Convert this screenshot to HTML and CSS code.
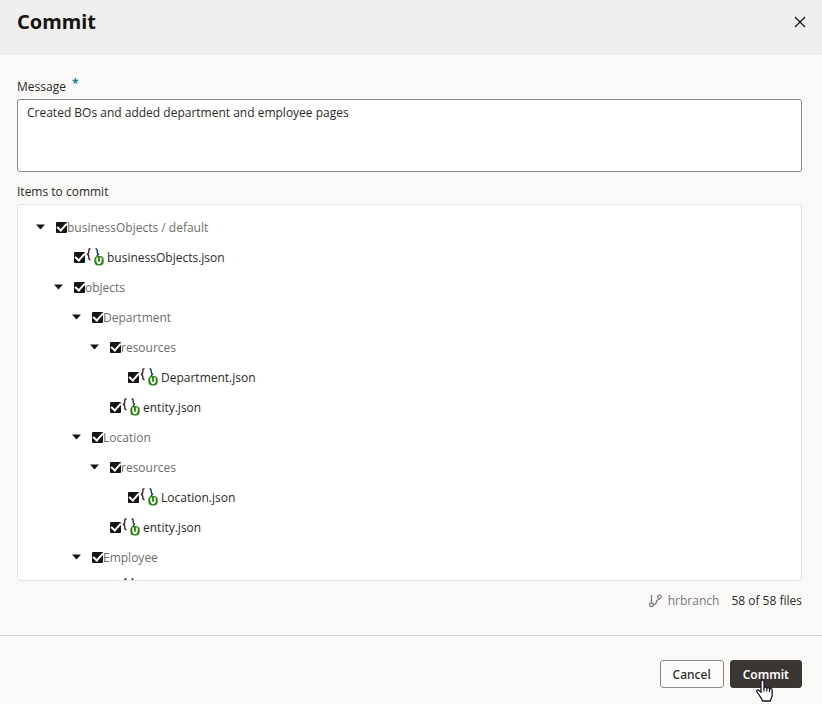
FILE: index.html
```html
<!DOCTYPE html>
<html lang="en">
<head>
<meta charset="utf-8">
<title>Commit</title>
<meta name="viewport" content="width=device-width, initial-scale=1">
<link rel="stylesheet" href="styles.css">
</head>
<body>
<svg class="sprite" aria-hidden="true">
  <symbol id="caret" viewBox="0 0 10 6"><path d="M0 0.5h9L4.500 5.500z" fill="#161513"/></symbol>
  <symbol id="json" viewBox="0 0 19 18">
    <path d="M5.500.7C4 .7 3.800 1.500 3.800 2.700v1.500c0 1.200-.4 1.700-1.800 2 1.400.3 1.800.8 1.800 2v1.500c0 1.200.2 2 1.700 2" fill="none" stroke="#4a1f20" stroke-width="1.400"/>
    <path d="M10.500.7c1.500 0 1.700.8 1.700 2v1.500c0 1.200.4 1.700 1.800 2-1.400.3-1.800.8-1.800 2v1" fill="none" stroke="#1c4158" stroke-width="1.400"/>
    <rect x="9.300" y="8" width="9.400" height="9.500" rx="4" fill="#2f8518"/>
    <path d="M12.200 9.500v3.300c0 3 3.600 3 3.600 0V9.500" fill="none" stroke="#fff" stroke-width="1.700"/>
  </symbol>
</svg>
<form class="dialog">
  <header class="header">
    <h1 class="title">Commit</h1>
    <button class="close" type="button" aria-label="Close"><svg width="12" height="12" viewBox="0 0 12 12"><path d="M1 1l10 10M11 1L1 11" fill="none" stroke="#161513" stroke-width="1.300"/></svg></button>
  </header>
  <main class="content">
    <label class="label" for="message">Message <span class="required">*</span></label>
    <textarea class="message" id="message">Created BOs and added department and employee pages</textarea>
    <h2 class="label" id="items">Items to commit</h2>
    <div class="tree">
      <ul class="branch" aria-labelledby="items">
        <li>
          <div class="row"><button class="caret" type="button" aria-label="Collapse"><svg width="10" height="6"><use href="#caret"/></svg></button><label class="node folder"><input type="checkbox" checked>businessObjects / default</label></div>
          <ul class="branch">
            <li><div class="row"><span class="caret"></span><label class="node"><input type="checkbox" checked><svg class="file" width="19" height="18"><use href="#json"/></svg>businessObjects.json</label></div></li>
            <li>
              <div class="row"><button class="caret" type="button" aria-label="Collapse"><svg width="10" height="6"><use href="#caret"/></svg></button><label class="node folder"><input type="checkbox" checked>objects</label></div>
              <ul class="branch">
                <li>
                  <div class="row"><button class="caret" type="button" aria-label="Collapse"><svg width="10" height="6"><use href="#caret"/></svg></button><label class="node folder"><input type="checkbox" checked>Department</label></div>
                  <ul class="branch">
                    <li>
                      <div class="row"><button class="caret" type="button" aria-label="Collapse"><svg width="10" height="6"><use href="#caret"/></svg></button><label class="node folder"><input type="checkbox" checked>resources</label></div>
                      <ul class="branch">
                        <li><div class="row"><span class="caret"></span><label class="node"><input type="checkbox" checked><svg class="file" width="19" height="18"><use href="#json"/></svg>Department.json</label></div></li>
                      </ul>
                    </li>
                    <li><div class="row"><span class="caret"></span><label class="node"><input type="checkbox" checked><svg class="file" width="19" height="18"><use href="#json"/></svg>entity.json</label></div></li>
                  </ul>
                </li>
                <li>
                  <div class="row"><button class="caret" type="button" aria-label="Collapse"><svg width="10" height="6"><use href="#caret"/></svg></button><label class="node folder"><input type="checkbox" checked>Location</label></div>
                  <ul class="branch">
                    <li>
                      <div class="row"><button class="caret" type="button" aria-label="Collapse"><svg width="10" height="6"><use href="#caret"/></svg></button><label class="node folder"><input type="checkbox" checked>resources</label></div>
                      <ul class="branch">
                        <li><div class="row"><span class="caret"></span><label class="node"><input type="checkbox" checked><svg class="file" width="19" height="18"><use href="#json"/></svg>Location.json</label></div></li>
                      </ul>
                    </li>
                    <li><div class="row"><span class="caret"></span><label class="node"><input type="checkbox" checked><svg class="file" width="19" height="18"><use href="#json"/></svg>entity.json</label></div></li>
                  </ul>
                </li>
                <li>
                  <div class="row"><button class="caret" type="button" aria-label="Collapse"><svg width="10" height="6"><use href="#caret"/></svg></button><label class="node folder"><input type="checkbox" checked>Employee</label></div>
                  <ul class="branch">
                    <li><div class="row"><span class="caret"></span><label class="node"><input type="checkbox" checked aria-label="File"><svg class="file" width="19" height="18"><use href="#json"/></svg></label></div></li>
                  </ul>
                </li>
              </ul>
            </li>
          </ul>
        </li>
      </ul>
    </div>
    <div class="status">
      <span class="git"><svg width="14" height="14" viewBox="0 0 14 14" fill="none" stroke="#7a7876" stroke-width="1.200"><path d="M3.500 1v8M5.500 10.800c3.500 0 2.500-3.300 3.500-4.300s1.800-.5 2.200-2"/><circle cx="3.500" cy="10.800" r="1.900"/><circle cx="11.500" cy="2.800" r="1.800"/></svg>hrbranch</span>
      <span>58 of 58 files</span>
    </div>
  </main>
  <footer class="footer">
    <button class="button" type="button">Cancel</button>
    <button class="button primary" type="submit">Commit
      <svg class="pointer" width="18" height="24" viewBox="0 0 18 24" aria-hidden="true"><path d="M5 2.500c0-2 3-2 3 0V9c.3-1.500 2.700-1.300 2.800.4.500-1.200 2.600-.9 2.700.7.700-1 2.700-.6 2.700 1.200V16c0 2.500-1.700 3.500-1.700 6H6.500c-.3-2.300-2.300-4-3.300-6L1 12.800c-.8-1.600.8-2.600 2-1.500l2 2z" fill="#fff" stroke="#15152b" stroke-width="1.300" stroke-linejoin="round"/><path d="M8 9v3.500M10.800 9.500v3M13.500 10.200v2.800" stroke="#15152b" stroke-width="1.200"/></svg>
    </button>
  </footer>
</form>
</body>
</html>
```
FILE: styles.css
```css
* {
  box-sizing: border-box;
}

body {
  margin: 0;
  background: #faf9f8;
  color: #2b2927;
  font: 12px/16px "Open Sans", "Noto Sans", sans-serif;
}

button,
textarea {
  font: inherit;
  color: inherit;
}

.sprite {
  position: absolute;
  width: 0;
  height: 0;
}

.dialog {
  display: flex;
  flex-direction: column;
  height: 100vh;
}

.header {
  display: flex;
  justify-content: space-between;
  align-items: flex-start;
  padding: 10px 16px 21px 17px;
  background: #f0efed;
}

.title {
  margin: 0;
  color: #161513;
  font-family: "Noto Sans", sans-serif;
  font-size: 20px;
  line-height: 24px;
  font-weight: 700;
}

.close {
  display: flex;
  padding: 6px 0;
  border: 0;
  background: none;
}

.content {
  display: flex;
  flex: 1;
  flex-direction: column;
  min-height: 0;
  padding: 24px 20px 26px 17px;
}

.label {
  margin: 0;
  font-size: 12px;
  line-height: 16px;
  font-weight: 400;
}

.required {
  margin-left: 3px;
  color: #227e9e;
  font-weight: 700;
  line-height: 4px;
  vertical-align: 3px;
}

.message {
  display: block;
  flex: none;
  width: 100%;
  height: 73px;
  margin: 4px 0 12px;
  padding: 5px 9px;
  border: 1px solid #8b8987;
  border-radius: 3px;
  background: #fff;
  resize: none;
}

.tree {
  flex: 1;
  min-height: 0;
  margin-top: 4px;
  padding: 8px 18px 0;
  overflow: hidden;
  border: 1px solid #e6e4e2;
  border-radius: 4px;
  background: #fff;
}

.branch {
  margin: 0;
  padding: 0;
  list-style: none;
}

.branch .branch {
  padding-left: 18px;
}

.row {
  display: flex;
  align-items: center;
  gap: 10px;
  height: 30px;
}

.caret {
  display: flex;
  width: 10px;
  padding: 0 0 2px;
  border: 0;
  background: none;
}

.node {
  display: flex;
  align-items: center;
}

.node input {
  display: flex;
  align-items: center;
  justify-content: center;
  width: 11px;
  height: 11px;
  margin: 0 0 2px;
  appearance: none;
  border-radius: 1px;
  background: #161513;
}

.node input:checked::after {
  width: 8px;
  height: 4px;
  margin-bottom: 2px;
  border: solid #fff;
  border-width: 0 0 2px 2px;
  content: "";
  transform: rotate(-48deg);
}

.folder {
  color: #6f6d6b;
}

.file {
  margin: 0 3px 2px 0;
}

.status {
  display: flex;
  justify-content: flex-end;
  gap: 12px;
  margin-top: 12px;
}

.git {
  display: flex;
  align-items: center;
  gap: 6px;
  color: #7a7876;
}

.footer {
  display: flex;
  justify-content: flex-end;
  gap: 6px;
  padding: 24px 20px 16px;
  border-top: 1px solid #d1cfcd;
}

.button {
  position: relative;
  height: 28px;
  padding: 2px 12px 0;
  border: 1px solid #8b8987;
  border-radius: 3px;
  background: #fdfcfc;
  font-family: "Noto Sans", sans-serif;
  font-weight: 500;
}

.primary {
  border-color: #3a3631;
  background: #3a3631;
  color: #fff;
  font-weight: 600;
}

.pointer {
  position: absolute;
  left: 25px;
  top: 18px;
}
```
